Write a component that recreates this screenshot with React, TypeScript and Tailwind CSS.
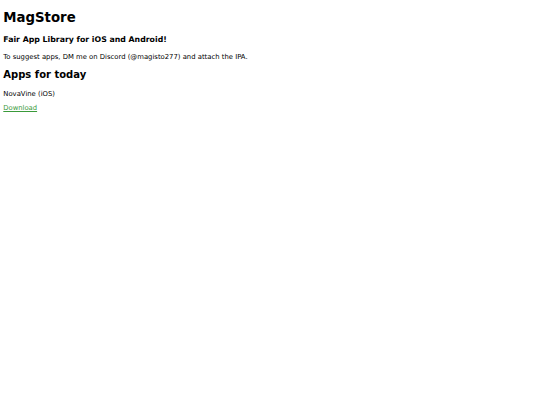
export default function App() {
  return (
    <div className="flex flex-col items-start pl-[3.3px] pt-[10px] font-['DejaVu_Sans',sans-serif] text-black bg-white min-h-[405px]">
      <h1 className="text-[13.3px] font-bold leading-[16px]">MagStore</h1>
      <h3 className="mt-[9px] text-[7.8px] font-bold leading-[10px]">Fair App Library for iOS and Android!</h3>
      <p className="mt-[7.7px] text-[6.85px] leading-[8px]">To suggest apps, DM me on Discord (@magisto277) and attach the IPA.</p>
      <h2 className="mt-[8px] text-[10px] font-bold leading-[12px]">Apps for today</h2>
      <p className="mt-[9.5px] text-[6.85px] leading-[8px]">NovaVine (iOS)</p>
      <a href="#" className="mt-[6px] text-[6.8px] leading-[8px] text-[#3a9a3a] underline">Download</a>
    </div>
  );
}
